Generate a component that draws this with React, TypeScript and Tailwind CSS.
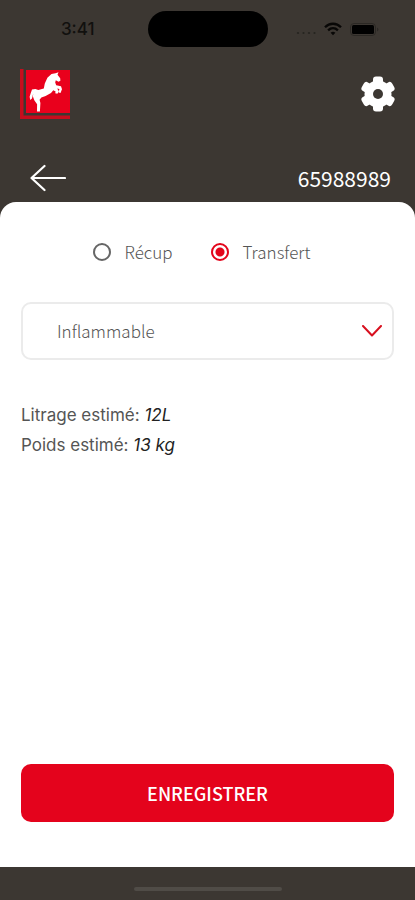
import { useState } from "react";

const modes = ["Récup", "Transfert"];
const toothAngles = [0, 60, 120];

function StatusBar() {
  return (
    <div className="grid h-[58px] grid-cols-[1fr_120px_1fr] items-center text-black">
      <time className="justify-self-center pl-2 font-['Inter',sans-serif] text-[17px] leading-6 font-medium text-[#11100e]">
        3:41
      </time>
      <div className="h-9 rounded-full bg-black" />
      <div className="flex items-center gap-2 pl-7">
        <svg viewBox="0 0 20 12" className="h-3 w-5" fill="#262420" aria-hidden="true">
          <circle cx="2" cy="10" r="1.1" />
          <circle cx="7.5" cy="10" r="1.1" />
          <circle cx="13" cy="10" r="1.1" />
          <circle cx="18.5" cy="10" r="1.1" />
        </svg>
        <svg viewBox="0 0 18 14" className="h-[14px] w-[18px]" fill="none" stroke="#080706" strokeWidth="2.3" aria-hidden="true">
          <path d="M1 5.2C5.6 .6 12.4 .6 17 5.2" />
          <path d="M4.1 8.3C7 5.5 11 5.5 13.9 8.3" />
          <path d="M9 13.2 6.6 10.8Q9 8.7 11.4 10.8Z" fill="#080706" stroke="none" />
        </svg>
        <svg viewBox="0 0 30 13" className="h-[13px] w-[30px]" aria-hidden="true">
          <rect x=".5" y=".5" width="25" height="12" rx="3.5" fill="none" stroke="#2b2824" />
          <rect x="2" y="2" width="22" height="9" rx="1.5" fill="#000" />
          <path d="M27 4.5Q30 6.5 27 8.5Z" fill="#2b2824" />
        </svg>
      </div>
    </div>
  );
}

function Logo() {
  return (
    <svg viewBox="0 0 50 50" className="size-[50px]" role="img" aria-label="Logo">
      <path d="M0 0H3.5V46.5H50V50H0Z" fill="#c70d1d" />
      <path d="M6 1H50V44H6Z" fill="#e9001c" />
      <path
        d="M38.5 3.3 37.5 5.8 40.2 9.2 40.4 11.8 38.5 12.8 35.8 11.2 35.2 13.5 36.2 16.2 41 17.2 42 20.2 40.5 24 38.6 23.5 39.4 20 37.2 19.6 38.8 22.2 37.4 24.8 35.2 24.2 35.6 22.6 33.3 21.3 31 24 25.6 27 21.4 28.6 19.6 30.8 20.4 34 19.9 42.5 17 42.5 17.1 35.2 14.3 31.2 12.9 27.4 13.2 24.5 12 29.5 10.2 31 9.6 27.8 10.6 24.4 12 20.6 15.4 20 18.3 21 23.8 19.4 24.8 14.5 27.4 8.8 31.5 5 35.5 4.2Z"
        fill="#fff"
      />
    </svg>
  );
}

function SettingsIcon() {
  return (
    <svg viewBox="-21 -21 42 42" className="size-[42px]" fill="#fff" aria-hidden="true">
      <circle r="13.5" />
      {toothAngles.map((angle) => (
        <rect key={angle} x="-5" y="-17.5" width="10" height="35" rx="3" transform={`rotate(${angle})`} />
      ))}
      <circle r="5" fill="#3c3732" />
    </svg>
  );
}

export default function App() {
  const [mode, setMode] = useState("Transfert");

  return (
    <div className="flex min-h-screen flex-col bg-[#3c3732] font-['Noto_Sans_CJK_SC',sans-serif]">
      <StatusBar />
      <header className="flex h-[72px] items-center justify-between pr-4 pl-5">
        <Logo />
        <button type="button" aria-label="Paramètres">
          <SettingsIcon />
        </button>
      </header>
      <div className="flex h-[72px] items-center justify-between px-6 pt-6">
        <button type="button" aria-label="Retour" className="pl-1.5">
          <svg viewBox="0 0 36 28" className="h-7 w-9" fill="none" stroke="#fff" strokeWidth="2.2" strokeLinecap="round" strokeLinejoin="round" aria-hidden="true">
            <path d="M14.5 2 1.5 14l13 12M1.5 14H35" />
          </svg>
        </button>
        <h1 className="text-[21px] leading-6 font-normal text-white">65988989</h1>
      </div>

      <main className="flex flex-1 flex-col rounded-t-2xl bg-white px-[21px] pt-[38px] pb-[45px]">
        <fieldset aria-label="Mode" className="flex justify-center gap-[38px] pr-3">
          {modes.map((name) => (
            <label key={name} className="flex items-center gap-3.5 text-[17px] leading-6 font-light text-[#555]">
              <input
                type="radio"
                name="mode"
                value={name}
                checked={mode === name}
                onChange={() => setMode(name)}
                className="size-[18px] appearance-none rounded-full border-2 border-[#666] checked:border-[#e3051b] checked:bg-[radial-gradient(circle,#e3051b_4px,#fff_5px)]"
              />
              {name}
            </label>
          ))}
        </fieldset>

        <div className="mt-[38px] grid items-center">
          <select
            aria-label="Catégorie"
            className="col-start-1 row-start-1 h-[58px] w-full appearance-none rounded-[10px] border-2 border-[#ebebeb] bg-white pr-14 pl-[34px] text-[17px] font-light text-[#555]"
          >
            <option>Inflammable</option>
          </select>
          <svg viewBox="0 0 20 12" className="pointer-events-none col-start-1 row-start-1 mr-3 h-3 w-5 justify-self-end" fill="none" stroke="#d8101f" strokeWidth="2" strokeLinecap="round" strokeLinejoin="round" aria-hidden="true">
            <path d="m1 1 9 9.5L19 1" />
          </svg>
        </div>

        <div className="mt-10 font-['Inter',sans-serif] text-[17px] leading-[30px] text-[#555]">
          <p>
            Litrage estimé: <em className="text-[#222]">12L</em>
          </p>
          <p>
            Poids estimé: <em className="text-[#222]">13 kg</em>
          </p>
        </div>

        <button type="button" className="mt-auto h-[58px] w-full rounded-[10px] bg-[#e4031c] text-lg font-medium text-white">
          ENREGISTRER
        </button>
      </main>

      <footer className="flex h-[33px] justify-center pt-5">
        <div className="h-1 w-[148px] rounded-full bg-[#504c47]" />
      </footer>
    </div>
  );
}
